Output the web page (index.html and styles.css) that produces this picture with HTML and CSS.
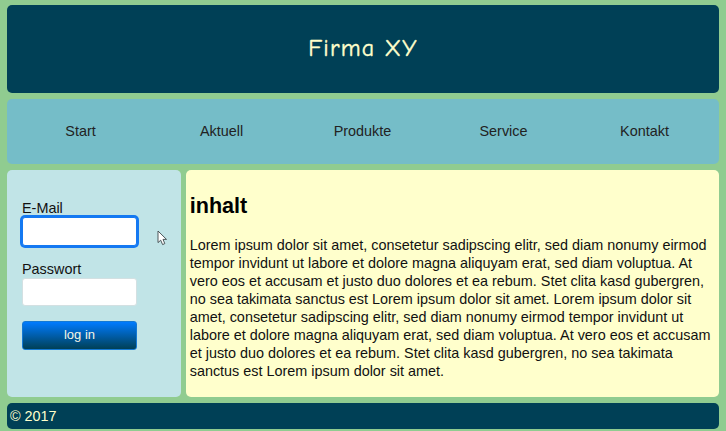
FILE: index.html
```html
<!DOCTYPE html>
<html lang="de">
<head>
<meta charset="utf-8">
<title>Firma XY</title>
<link rel="stylesheet" href="styles.css">
</head>
<body>
<div class="page">
  <header class="header"><h1 class="brand">Firma XY</h1></header>
  <nav class="nav">
    <a>Start</a><a>Aktuell</a><a>Produkte</a><a>Service</a><a>Kontakt</a>
  </nav>
  <aside class="login">
    <form class="form">
      <label for="mail">E-Mail</label>
      <input class="field active" id="mail" type="text">
      <label for="pass">Passwort</label>
      <input class="field" id="pass" type="password">
      <button class="submit" type="button">log in</button>
    </form>
    <svg class="cursor" width="11" height="16" viewBox="0 0 11 16"><path d="M1 1V12.6L3.7 10.2L5.6 14.6L7.8 13.6L6 9.4H9.5Z" fill="#fff" stroke="#3c4649" stroke-width=".9" stroke-linejoin="round"/></svg>
  </aside>
  <main class="content">
    <h2>inhalt</h2>
    <p>Lorem ipsum dolor sit amet, consetetur sadipscing elitr, sed diam nonumy eirmod<br>
    tempor invidunt ut labore et dolore magna aliquyam erat, sed diam voluptua. At<br>
    vero eos et accusam et justo duo dolores et ea rebum. Stet clita kasd gubergren,<br>
    no sea takimata sanctus est Lorem ipsum dolor sit amet. Lorem ipsum dolor sit<br>
    amet, consetetur sadipscing elitr, sed diam nonumy eirmod tempor invidunt ut<br>
    labore et dolore magna aliquyam erat, sed diam voluptua. At vero eos et accusam<br>
    et justo duo dolores et ea rebum. Stet clita kasd gubergren, no sea takimata<br>
    sanctus est Lorem ipsum dolor sit amet.</p>
  </main>
  <footer class="footer">© 2017</footer>
</div>
</body>
</html>
```
FILE: styles.css
```css
* { box-sizing: border-box; }
body {
  margin: 0;
  height: 431px;
  overflow: hidden;
  background: #90cc90;
  color: #111;
  font: 14.4px/18px "Liberation Sans", Arial, sans-serif;
}
.page {
  display: grid;
  grid-template: 88.5px 65.5px 227.5px 26px / 173.5px 1fr;
  gap: 5.5px;
  padding: 4.5px 7px 0;
}
.header, .nav, .login, .content, .footer { border-radius: 5px; }
.header, .nav, .footer { grid-column: 1 / -1; }
.header {
  display: flex;
  align-items: center;
  justify-content: center;
  padding-bottom: 2px;
  background: #004056;
}
.brand {
  margin: 0;
  color: #ffffcc;
  font: 400 24px/30px "Comic Neue", "Comic Sans MS", cursive;
  letter-spacing: 1.2px;
  -webkit-text-stroke: .4px #ffffcc;
}
.nav {
  display: flex;
  align-items: center;
  padding: 0 4px 1px 3px;
  background: #75bdc8;
  color: #222;
}
.nav a { flex: 1; text-align: center; }
.login {
  position: relative;
  padding: 29px 15px 0;
  background: #c1e4e7;
}
.form { display: flex; flex-direction: column; width: 115px; }
.field {
  width: 115px;
  height: 28px;
  margin: 0 0 14.5px;
  border: 1px solid #d3e0e2;
  border-radius: 3px;
  background: #fff;
}
.active { height: 29px; border-color: #1479f2; box-shadow: 0 0 0 2px #1479f2; outline: none; }
.submit {
  height: 29px;
  padding: 0;
  border: 1px solid #1479d4;
  border-radius: 3px;
  background: linear-gradient(#007bff, #004056);
  color: #f5f5e5;
  font: 13px/18px "Liberation Sans", Arial, sans-serif;
}
.cursor { position: absolute; left: 150px; top: 60px; }
.content { padding: 22px 3.7px 0; background: #ffffcc; }
.content h2 { margin: 0 0 17px; color: #000; font-size: 21.6px; line-height: 27px; }
.content p { margin: 0; white-space: nowrap; }
.footer { padding: 4px 3px; background: #004056; color: #ffffcc; }
```
